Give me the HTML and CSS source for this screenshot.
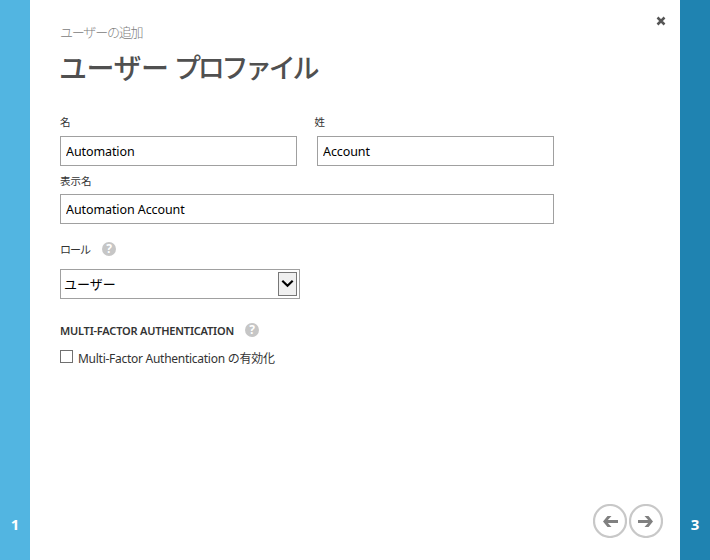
FILE: index.html
```html
<!DOCTYPE html>
<html lang="ja">
<head>
<meta charset="utf-8">
<title>ユーザー プロファイル</title>
<link rel="stylesheet" href="styles.css">
</head>
<body>
<div class="wizard">
  <aside class="rail rail-prev">1</aside>
  <main class="page">
    <button class="close" aria-label="閉じる"><svg width="10" height="10" viewBox="0 0 10 10"><path d="M1.5 1.5 8.5 8.5M8.5 1.5 1.5 8.5" stroke="#555" stroke-width="2.5" fill="none"/></svg></button>
    <div class="eyebrow">ユーザーの追加</div>
    <h1 class="title"><span class="title-user">ユーザー</span> <span class="title-profile">プロファイル</span></h1>
    <div class="names">
      <label class="field"><span class="label">名</span><input class="input" type="text" value="Automation"></label>
      <label class="field"><span class="label label-last">姓</span><input class="input" type="text" value="Account"></label>
    </div>
    <label class="field field-wide"><span class="label">表示名</span><input class="input" type="text" value="Automation Account"></label>
    <div class="role-row"><span class="role-label">ロール</span><span class="help">?</span></div>
    <div class="select"><span class="select-text">ユーザー</span><span class="select-button"><svg width="13" height="9" viewBox="0 0 13 9"><path d="M1.3 .8 6.5 5.7 11.7 .8" fill="none" stroke="#000" stroke-width="2.2"/></svg></span></div>
    <div class="mfa-row"><span class="mfa-title">MULTI-FACTOR AUTHENTICATION</span><span class="help">?</span></div>
    <label class="check"><span class="box"></span><span class="check-text">Multi-Factor Authentication <span class="check-ja">の有効化</span></span></label>
    <nav class="nav">
      <button class="round" aria-label="戻る"><svg width="34" height="34" viewBox="0 0 34 34"><circle cx="17" cy="17" r="16" fill="#fff" stroke="#c8c8c8" stroke-width="2.2"/><path d="M25 17.5H12" stroke="#808080" stroke-width="3"/><path d="M14.5 12H18.5L13.5 17.5 18.5 23H14.5L10 17.5Z" fill="#808080"/></svg></button>
      <button class="round" aria-label="次へ"><svg width="34" height="34" viewBox="0 0 34 34"><circle cx="17" cy="17" r="16" fill="#fff" stroke="#c8c8c8" stroke-width="2.2"/><path d="M9 17.5H22" stroke="#808080" stroke-width="3"/><path d="M19.5 12H15.5L20.5 17.5 15.5 23H19.5L24 17.5Z" fill="#808080"/></svg></button>
    </nav>
  </main>
  <aside class="rail rail-next">3</aside>
</div>
</body>
</html>
```
FILE: styles.css
```css
* { box-sizing: border-box; }
body { margin: 0; font-family: "Noto Sans", "Noto Sans CJK JP", sans-serif; color: #333; background: #fff; }
button { border: 0; padding: 0; background: none; display: block; }
svg { display: block; }
.wizard { display: flex; height: 560px; }
.rail { width: 30px; display: flex; align-items: flex-end; justify-content: center; padding-bottom: 26px; color: #fff; font-weight: 700; font-size: 15px; line-height: 20px; }
.rail-prev { background: #52b5e1; }
.rail-next { background: #1f83b1; }
.page { position: relative; width: 650px; padding: 23px 30px 0; }
.close { position: absolute; left: 626px; top: 16px; }
.eyebrow { height: 18px; line-height: 18px; font-family: "Noto Sans CJK JP", sans-serif; font-weight: 300; font-size: 13px; letter-spacing: -1.2px; color: #808080; white-space: nowrap; }
.title { display: flex; gap: 7px; margin: 8px 0 0; height: 36px; line-height: 36px; font-family: "Noto Sans CJK JP", sans-serif; font-size: 28px; font-weight: 500; color: #505050; white-space: nowrap; }
.title-user { width: 108px; margin-left: -1px; letter-spacing: -0.5px; }
.title-profile { font-size: 27px; letter-spacing: -3.3px; }
.names { display: flex; gap: 20px; margin-top: 30px; }
.field { display: block; width: 237px; }
.field-wide { width: 494px; margin-top: 8px; }
.label { display: block; height: 14px; line-height: 14px; margin-bottom: 7px; font-family: "Noto Sans CJK JP", sans-serif; font-size: 10.5px; }
.label-last { margin-left: -2.5px; }
.field-wide .label { height: 13px; line-height: 13px; }
.input { display: block; width: 100%; height: 30px; padding: 0 5px; border: 1px solid #a0a0a0; background: #fff; font: 12.5px "Noto Sans", sans-serif; color: #000; letter-spacing: -0.09px; }
.role-row, .mfa-row { display: flex; align-items: center; height: 16px; }
.role-row { margin-top: 17px; gap: 12px; }
.role-label { width: 30px; font-family: "Noto Sans CJK JP", sans-serif; font-size: 11px; line-height: 16px; letter-spacing: -1px; white-space: nowrap; }
.help { width: 14px; height: 14px; border-radius: 50%; background: #c6c6c6; color: #fff; font-size: 12px; line-height: 14px; font-weight: 700; text-align: center; }
.select { display: flex; align-items: center; justify-content: space-between; width: 240px; height: 30px; margin-top: 12px; padding: 0 2px 0 3px; border: 1px solid #a0a0a0; color: #000; }
.select-text { font-family: "Noto Sans CJK JP", sans-serif; font-size: 13px; line-height: 28px; }
.select-button { display: flex; align-items: center; justify-content: center; width: 19px; height: 24px; border: 1px solid #777; background: #f0f0f0; }
.mfa-row { margin-top: 23px; gap: 11px; }
.mfa-title { width: 174px; font-weight: 600; font-size: 11px; letter-spacing: -0.2px; white-space: nowrap; }
.check { display: flex; align-items: flex-start; margin-top: 12px; }
.box { width: 13px; height: 13px; border: 1px solid #707070; background: #fff; }
.check-text { margin: -1px 0 0 5px; line-height: 18px; font-size: 12px; letter-spacing: -0.27px; white-space: nowrap; }
.check-ja { font-family: "Noto Sans CJK JP", sans-serif; }
.nav { position: absolute; left: 563px; top: 504px; display: flex; gap: 2px; }
```
